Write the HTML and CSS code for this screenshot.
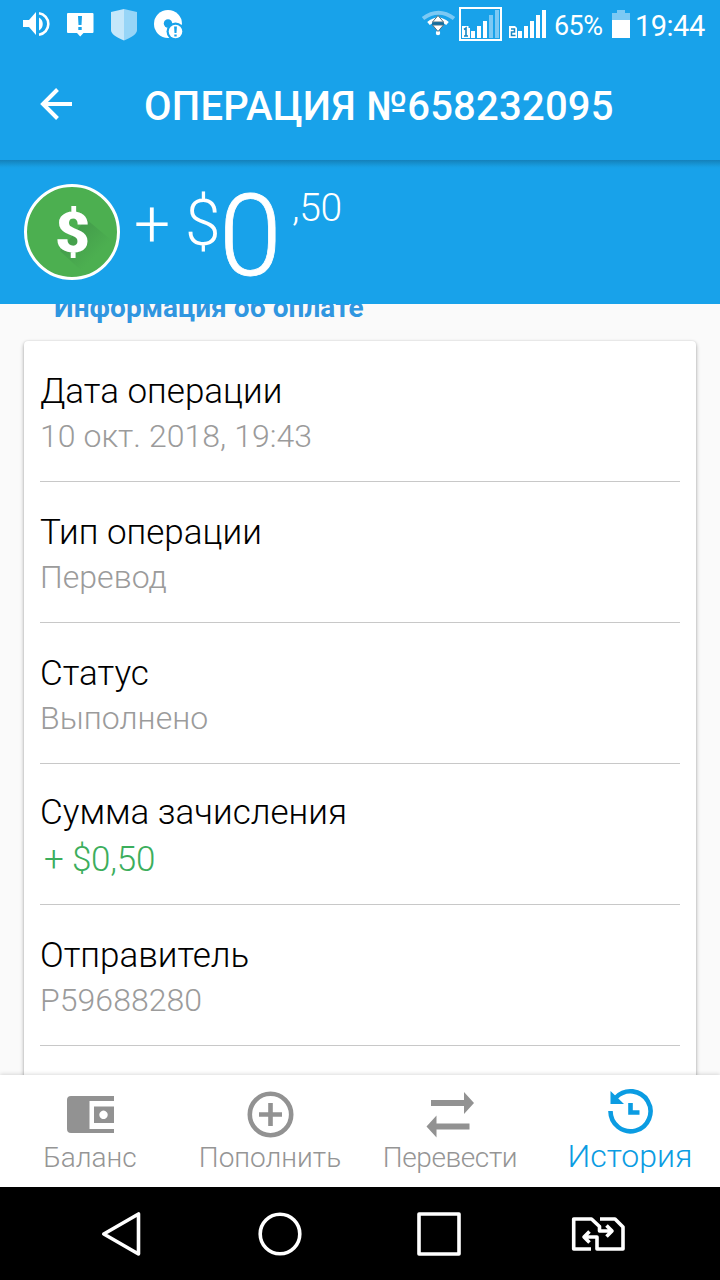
FILE: index.html
```html
<!DOCTYPE html>
<html lang="ru">
<head>
<meta charset="utf-8">
<title>Операция №658232095</title>
<link rel="stylesheet" href="styles.css">
</head>
<body>
<div class="screen">
  <header class="status">
    <svg class="status-left" width="190" height="50" viewBox="0 0 190 50" fill="#fff">
      <path d="M23 20h6l7-8v23l-7-8h-6z"/>
      <path d="M39 17.500a7.500 7.500 0 0 1 0 13z"/>
      <path d="M39 13.300a10.800 10.800 0 0 1 0 21.400" fill="none" stroke="#fff" stroke-width="2.600"/>
      <path d="M68 13h24.500a1 1 0 0 1 1 1v18a1 1 0 0 1-1 1H83.500l-3.300 3.400L77 33h-9a1 1 0 0 1-1-1V14a1 1 0 0 1 1-1z"/>
      <path d="M78 16h4l-.5 9h-3zM78.300 27h3.400v3h-3.400z" fill="#18a2ea"/>
      <path d="M124 9l-13 3v18c0 4 5 7 13 10.500z" fill="#c5e7fa"/>
      <path d="M124 9l13 3v18c0 4-5 7-13 10.500z" fill="#97d5f7"/>
      <path d="M168 10a14 14 0 1 0 0 28h14V24a14 14 0 0 0-14-14z"/>
      <circle cx="168" cy="23.500" r="4.200" fill="#18a2ea"/>
      <circle cx="175.500" cy="31.500" r="9" fill="#18a2ea"/>
      <path d="M182 24v14h-8z" fill="#18a2ea"/>
      <circle cx="175.500" cy="31.500" r="6.800"/>
      <path d="M174.100 26.500h2.800l-.4 6.500h-2zM174.300 34.500h2.400v2h-2.400z" fill="#18a2ea"/>
    </svg>
    <svg class="signals" width="130" height="50" viewBox="420 0 130 50">
      <path d="M423 18.500q15.500-11.500 31 0" fill="none" stroke="#7cc9f4" stroke-width="4"/>
      <path d="M428.500 23.500q9.500-8 19 0" fill="none" stroke="#fff" stroke-width="4"/>
      <circle cx="438" cy="33" r="2.200" fill="#fff"/>
      <path d="M438 15.500l5.500 6.500h-11zM438 31.500l5.500-6.500h-11z" fill="#fff" stroke="#58717d" stroke-width="1"/>
      <path d="M432 23.500h12" stroke="#176b98" stroke-width="2.500"/>
      <path d="M460 8h41v32h-41z" fill="none" stroke="#fff" stroke-width="2"/>
      <path d="M471 31h4v7h-4zM477 26h4v12h-4zM483 21h4v17h-4z" fill="#fff"/>
      <path d="M489 15h4v23h-4zM495 10h4v28h-4z" fill="#7cc9f4"/>
      <path d="M462 26h6.500v2h1.500v10h-8z" fill="#fff"/>
      <path d="M464 29.500l2-1.500v8m-2 0h4" stroke="#1687c3" stroke-width="1.600" fill="none"/>
      <path d="M518 31h4v7h-4zM524 26h4v12h-4zM530 21h4v17h-4zM536 15h4v23h-4zM542 10h4v28h-4z" fill="#fff"/>
      <path d="M509 26h6l2 2v10h-8z" fill="#fff"/>
      <path d="M511 29h3.500v3h-3v3.500h4" stroke="#1687c3" stroke-width="1.500" fill="none"/>
    </svg>
    <span class="percent">65%</span>
    <svg class="battery" width="18" height="50" viewBox="0 0 18 50"><path d="M0 13h5v-3h8v3h5v7H0z" fill="#7cc9f4"/><path d="M0 20h18v18H0z" fill="#fff"/></svg>
    <span class="clock">19:44</span>
  </header>

  <div class="appbar">
    <svg class="back" width="34" height="34" viewBox="0 0 34 34" fill="none" stroke="#fff" stroke-width="4"><path d="M18.500 2.500L4 17l14.500 14.500M4 17h29"/></svg>
    <h1 class="title">ОПЕРАЦИЯ №658232095</h1>
  </div>

  <section class="hero">
    <svg class="coin" width="96" height="96" viewBox="0 0 96 96">
      <defs>
        <linearGradient id="shade" x1="45" y1="45" x2="72" y2="72" gradientUnits="userSpaceOnUse"><stop offset="0" stop-color="#42994a"/><stop offset="1" stop-color="#4caf50"/></linearGradient>
      </defs>
      <circle cx="48" cy="48" r="46.500" fill="#4caf50"/>
      <path d="M62 35L92 60Q84 84 62 91L36 67z" fill="url(#shade)"/>
      <circle cx="48" cy="48" r="46.500" fill="none" stroke="#fff" stroke-width="3"/>
      <text class="coin-sign" transform="translate(48.500 68) scale(1.08 1)" text-anchor="middle">$</text>
    </svg>
    <span class="plus">+</span>
    <span class="dollar">$</span>
    <span class="whole">0</span>
    <span class="cents">,50</span>
  </section>

  <main class="content">
    <h2 class="heading">Информация об оплате</h2>
    <div class="card">
      <div class="row"><div class="label">Дата операции</div><div class="value">10 окт. 2018, 19:43</div></div>
      <div class="row"><div class="label">Тип операции</div><div class="value">Перевод</div></div>
      <div class="row"><div class="label">Статус</div><div class="value">Выполнено</div></div>
      <div class="row sum"><div class="label">Сумма зачисления</div><div class="value">+ $0,50</div></div>
      <div class="row"><div class="label">Отправитель</div><div class="value">P59688280</div></div>
      <div class="row"></div>
    </div>
  </main>

  <nav class="tabs">
    <div class="tab">
      <svg width="50" height="50" viewBox="0 0 50 50" fill="#929292"><path d="M6 6h43v5H24.500v28H49v4H6a4 4 0 0 1-4-4V10a4 4 0 0 1 4-4z"/><path fill-rule="evenodd" d="M29 16.500H49v16.500H29zM38.500 20.600a4.200 4.200 0 1 0 .01 0z"/></svg>
      <span>Баланс</span>
    </div>
    <div class="tab">
      <svg width="50" height="50" viewBox="0 0 50 50" fill="none" stroke="#929292"><circle cx="25.500" cy="24.500" r="20.700" stroke-width="4.600"/><path d="M25.500 13v23M14 24.500h23" stroke-width="4.600"/></svg>
      <span>Пополнить</span>
    </div>
    <div class="tab narrow">
      <svg width="50" height="50" viewBox="0 0 50 50" fill="#929292"><path d="M6 10h33V2l10 11-10 11v-8H6zM44.500 33.500H11.500V25.500L1.500 36.500l10 11v-8h33z"/></svg>
      <span>Перевести</span>
    </div>
    <div class="tab active">
      <svg width="50" height="50" viewBox="0 0 50 50"><path d="M5.500 25A20 20 0 1 0 11 11.500" fill="none" stroke="#0b9ce2" stroke-width="4.600"/><path d="M5.500 5v13h13.500z" fill="#0b9ce2"/><path d="M25.500 17v9.500h9" fill="none" stroke="#0b9ce2" stroke-width="4.600"/></svg>
      <span>История</span>
    </div>
  </nav>

  <footer class="system">
    <svg width="720" height="93" viewBox="0 1187 720 93" fill="none" stroke="#fff" stroke-width="3.600" stroke-linejoin="round">
      <path d="M103.800 1234L138.500 1214v40z"/>
      <circle cx="280" cy="1234" r="19.800"/>
      <path d="M419 1214h40v40h-40z"/>
      <path d="M591 1249H573.700v-30H591.500l8 7.500v4.500h11M606.500 1225.500l5.500 5.500-5.500 5.500M600 1219h15l8 8v22h-26v-12h-12M589.500 1231.500l-5.500 5.500 5.500 5.500"/>
    </svg>
  </footer>
</div>
</body>
</html>
```

FILE: styles.css
```css
* { box-sizing: border-box; }
body { margin: 0; font-family: Roboto, "Noto Sans", sans-serif; }
h1, h2 { margin: 0; }
svg { display: block; flex: none; }
.screen { width: 720px; height: 1280px; display: flex; flex-direction: column; overflow: hidden; background: #fafafa; }

.status { height: 50px; flex: none; display: flex; background: #18a2ea; color: #fff; white-space: nowrap; }
.signals { margin-left: 230px; }
.percent { width: 57px; margin-left: 4px; font-size: 27px; line-height: 52px; letter-spacing: -0.6px; }
.battery { margin-left: 1px; }
.clock { margin-left: 5px; font-size: 29px; line-height: 52px; letter-spacing: -0.5px; }

.appbar { height: 110px; flex: none; display: flex; background: #18a2ea; color: #fff; }
.back { margin: 37px 0 0 39px; }
.title { margin: 36px 0 0 71px; font-size: 40px; line-height: 41px; letter-spacing: 0.22px; font-weight: 500; white-space: nowrap; }

.hero { height: 144px; flex: none; display: flex; align-items: flex-start; padding: 24px 0 0 24px; color: #fff; background: linear-gradient(#1480ba, #168fcd 3px, #18a0e6 7px, #18a2ea 9px); }
.coin-sign { font-size: 56px; font-weight: 900; fill: #fff; }
.plus, .dollar, .whole, .cents { line-height: 1; flex: none; font-weight: 300; }
.plus { width: 64px; margin: 9px 0 0 14px; font-size: 64px; }
.dollar { width: 34px; margin: 8px 0 0 -13px; font-size: 64px; }
.whole { width: 70px; margin: -4px 0 0 0; font-size: 113px; letter-spacing: -2px; -webkit-text-stroke: 0.8px #fff; }
.cents { margin: 5px 0 0 3px; font-size: 39px; letter-spacing: -0.3px; }

.content { height: 771px; flex: none; overflow: hidden; padding: 0 24px; }
.heading { margin: -10px 0 0 30px; height: 47px; font-size: 28px; line-height: 28px; letter-spacing: 0.05px; font-weight: 700; color: #3096e0; }
.card { height: 800px; padding: 0 16px; background: #fff; border-radius: 4px; box-shadow: 0 2px 4px rgba(0,0,0,.32), 0 0 2px rgba(0,0,0,.12); }
.row { height: 141px; padding-top: 33px; border-bottom: 1px solid #c8c8c8; }
.label { font-size: 35px; line-height: 36px; font-weight: 300; color: #000; }
.value { margin-top: 10px; font-size: 32px; line-height: 32px; letter-spacing: 0.05px; font-weight: 300; color: #9b9b9b; }
.sum { padding-top: 31px; }
.sum .value { margin: 11px 0 0 4px; font-size: 35px; line-height: 35px; letter-spacing: -0.2px; color: #3cae5c; }

.tabs { position: relative; height: 112px; flex: none; display: grid; grid-template-columns: repeat(4, 180px); background: #fff; box-shadow: 0 -1px 4px rgba(0,0,0,.14); }
.tab { display: flex; flex-direction: column; align-items: center; padding-top: 15px; font-size: 28px; line-height: 28px; font-weight: 300; color: #959595; }
.tab span { margin-top: 4px; }
.narrow span { letter-spacing: -0.4px; }
.active { padding-top: 11px; font-size: 32px; line-height: 32px; color: #0b9ce2; }

.system { height: 93px; flex: none; background: #000; }
```
